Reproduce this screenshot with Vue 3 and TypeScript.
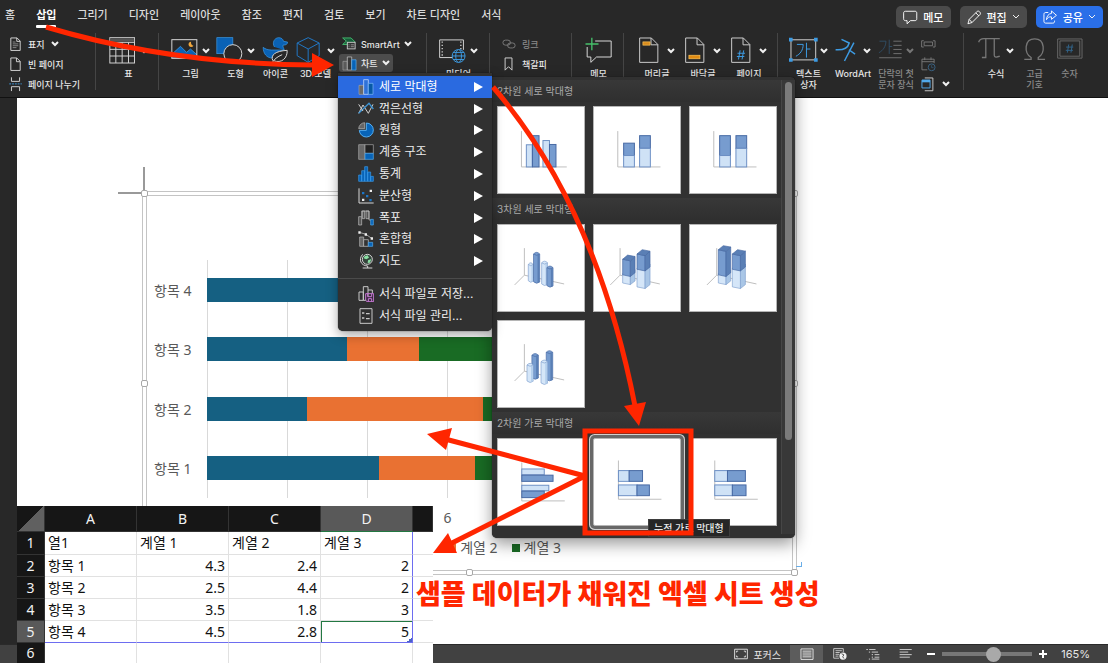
<script setup lang="ts">
import { ref } from 'vue'

interface Tool {
  icon: string
  lines: string[]
  chevron?: boolean
  dim?: boolean
}

interface Series {
  name: string
  tone: string
}

const tabs = ['홈', '삽입', '그리기', '디자인', '레이아웃', '참조', '편지', '검토', '보기', '차트 디자인', '서식']
const zoomLevel = ref(58)

/* Ribbon and status icons, drawn on a grid of three units per pixel */
const icons: Record<string, string> = {
  cover: '<g fill="none" stroke="#d6d6d6" stroke-width="3"><path d="M5 3H25L35 13V43H5Z"/><path d="M24 3V14H35"/></g><path d="M11 16H20M11 22H29M11 28H29M11 34H23" stroke="#8c8c8c" stroke-width="3"/>',
  blank: '<g fill="none" stroke="#d6d6d6" stroke-width="3"><path d="M5 3H24L35 14V43H5Z"/><path d="M23 3V15H35"/></g>',
  pageBreak: '<g fill="none" stroke="#d6d6d6" stroke-width="3"><path d="M7 1V14H33V1M7 45V31H33V45"/></g><path d="M0 22H40" stroke="#3f9be0" stroke-width="3" stroke-dasharray="6 3"/>',
  table: '<g fill="none" stroke="#cfcfcf" stroke-width="3"><rect x="2" y="2" width="74" height="76"/><path d="M2 16H76M2 37H76M2 57H76M20 16V78M39 16V78M58 16V78"/></g><path d="M3 9H75" stroke="#565656" stroke-width="10"/>',
  picture: '<path d="M4 62V50L28 28L46 46L58 36L76 52V62Z" fill="#0a62b5" stroke="#4aa3e8" stroke-width="2"/><rect x="2" y="8" width="75" height="56" fill="none" stroke="#d6d6d6" stroke-width="3"/><path d="M60 14A8 8 0 1 0 67 26A9 9 0 0 1 60 14Z" fill="#f0a63c"/>',
  shapes: '<rect x="2" y="2" width="48" height="48" fill="#0a62b5" stroke="#3c9be8" stroke-width="2"/><circle cx="50" cy="50" r="27" fill="#282828" stroke="#d6d6d6" stroke-width="3"/>',
  duck: '<path d="M37 30C29 18 36 2 50 2C58 2 63 7 64 13L76 15C77 21 71 25 63 24C61 29 65 33 66 39H28C17 39 9 36 3 31C3 50 14 63 30 63C36 50 48 42 66 39" fill="#0a62b5" stroke="#3c9be8" stroke-width="2"/><path d="M32 71C24 54 40 42 75 40C76 64 58 80 34 71M28 80C36 66 46 59 60 53" fill="#282828" stroke="#d6d6d6" stroke-width="3"/>',
  cube: '<path d="M36 2L69 18V56L36 76L3 56V18ZM3 18L36 36L69 18M36 36V76" fill="none" stroke="#2277c4" stroke-width="3"/>',
  smartart: '<path d="M2 3H29L42 16L34 24H2L14 13Z" fill="#175e39" stroke="#43b86d" stroke-width="3"/><rect x="17" y="17" width="25" height="21" fill="#333" stroke="#c9c9c9" stroke-width="3"/><path d="M21 25H24M28 25H38M21 31H24M28 31H38" stroke="#c9c9c9" stroke-width="2"/>',
  chart: '<path d="M3 17H17V45H3Z" fill="#5b5b5b" stroke="#a5a5a5" stroke-width="2"/><path d="M17 3H31V45H17Z" fill="#3a3a3a" stroke="#d8d8d8" stroke-width="2"/><path d="M31 12H45V45H31Z" fill="#0864b8" stroke="#67b4f0" stroke-width="2"/>',
  media: '<g fill="none" stroke="#d6d6d6" stroke-width="3"><path d="M42 58H2V3H76V34" /></g><path d="M10 8V55M68 8V32" stroke="#d6d6d6" stroke-width="4" stroke-dasharray="4 6"/><g fill="#282828" stroke="#3d9be3" stroke-width="3"><circle cx="61" cy="53" r="20"/><ellipse cx="61" cy="53" rx="9" ry="20"/><path d="M41 53H81M44 42H78M44 64H78"/></g>',
  link: '<g fill="none" stroke="#7c7c7c" stroke-width="3"><rect x="2" y="10" width="24" height="16" rx="8"/><rect x="17" y="19" width="24" height="16" rx="8"/></g>',
  bookmark: '<path d="M9 3H31V42L20 31L9 42Z" fill="none" stroke="#d6d6d6" stroke-width="3"/>',
  comment: '<path d="M30 12H78V60H34L17 76V60H6V30" fill="none" stroke="#d6d6d6" stroke-width="3"/><path d="M20 2V40M1 21H40" stroke="#45c06a" stroke-width="4"/>',
  header: '<path d="M2 2H38L58 22V77H2ZM37 2V23H58" fill="none" stroke="#cfcfcf" stroke-width="3"/><rect x="12" y="14" width="22" height="10" fill="#d98c1d" stroke="#ffc65c" stroke-width="2"/>',
  footer: '<path d="M2 2H38L58 22V77H2ZM37 2V23H58" fill="none" stroke="#cfcfcf" stroke-width="3"/><rect x="12" y="55" width="34" height="11" fill="#e08b12" stroke="#ffc65c" stroke-width="2"/>',
  pageNo: '<path d="M2 2H38L58 22V77H2ZM37 2V23H58" fill="none" stroke="#cfcfcf" stroke-width="3"/><path d="M28 40L23 68M39 40L34 68M20 49H43M18 59H41" stroke="#3d9be3" stroke-width="3"/>',
  textbox: '<rect x="6" y="8" width="75" height="61" fill="none" stroke="#cfcfcf" stroke-width="3"/><path d="M0 2H11V13H0ZM76 2H87V13H76ZM0 64H11V75H0ZM76 64H87V75H76Z" fill="#3d9be3"/><path d="M24 22H43C43 40 34 51 21 58M53 17V62M53 36H65" fill="none" stroke="#3d9be3" stroke-width="3"/>',
  wordart: '<path d="M22 3L48 15C44 31 28 40 2 38M64 14L32 76M47 38L68 53" fill="none" stroke="#3d9be3" stroke-width="5"/>',
  dropcap: '<path d="M5 9H27C26 27 18 40 3 48M38 4V52M38 27H48" fill="none" stroke="#31506a" stroke-width="3"/><path d="M52 9H80M52 23H80M52 37H80M52 51H80M4 65H80" stroke="#777" stroke-width="3"/>',
  signature: '<path d="M9 2H2V22H9M38 2H45V22H38M10 6H37V18H10Z" fill="none" stroke="#777" stroke-width="3"/>',
  calendar: '<path d="M20 41H3V7H42V20M3 15H42M12 1V10M32 1V10" fill="none" stroke="#777" stroke-width="3"/><circle cx="34" cy="33" r="11" fill="#282828" stroke="#3b6485" stroke-width="3"/><path d="M34 26V34H40" fill="none" stroke="#3b6485" stroke-width="2"/>',
  object: '<path d="M12 3H38V44H12" fill="none" stroke="#cfcfcf" stroke-width="3"/><path d="M3 10H29V35H3Z" fill="#282828" stroke="#51a9eb" stroke-width="3"/><path d="M3 13H29" stroke="#51a9eb" stroke-width="8"/>',
  pi: '<path d="M2 15C5 5 10 4 18 4H67M24 4V62H12M50 4V55C50 62 57 62 67 58" fill="none" stroke="#777" stroke-width="4"/>',
  omega: '<path d="M7 68H28V62C6 49 6 5 39 5C72 5 72 49 50 62V68H71" fill="none" stroke="#777" stroke-width="4"/>',
  number: '<path d="M2 5H77V64H2ZM9 11H70V58H9Z" fill="none" stroke="#686868" stroke-width="3"/><path d="M36 22L32 47M47 22L43 47M28 30H50M27 40H49" stroke="#31648a" stroke-width="3"/>',
  bubble: '<path d="M8 4H38C42 4 44 6 44 10V28C44 32 42 34 38 34H24L13 44V34H8C4 34 2 32 2 28V10C2 6 4 4 8 4Z" fill="none" stroke="#fff" stroke-width="3"/>',
  pencil: '<path d="M3 44L7 30L33 4C37 1 46 9 42 14L16 40ZM28 9L38 19M7 30L16 40" fill="none" stroke="#fff" stroke-width="3"/>',
  share: '<path d="M17 8H9C5 8 3 10 3 14V36C3 40 5 42 9 42H31C35 42 37 40 37 36V34M27 3L43 17L27 30V22C19 21 15 24 11 31C12 19 18 12 27 11Z" fill="none" stroke="#fff" stroke-width="3"/>',
  mColumn: '<path d="M3 19H17V46H3Z" fill="#6a6a6a" stroke="#a5a5a5" stroke-width="2"/><path d="M17 2H31V46H17Z" fill="#2f72d8" stroke="#dceaff" stroke-width="2"/><path d="M31 13H45V46H31Z" fill="#0759a6" stroke="#7fbcff" stroke-width="2"/>',
  mLine: '<path d="M2 37L15 12L31 37L45 10" fill="none" stroke="#d0d0d0" stroke-width="3"/><path d="M2 37L33 7L46 24" fill="none" stroke="#3e94d4" stroke-width="4"/><path d="M2 10L15 30" stroke="#d0d0d0" stroke-width="3"/>',
  mPie: '<path d="M25 3A21 21 0 1 1 4 25H25Z" fill="#0864b8" stroke="#54aff3" stroke-width="3"/><path d="M20 2V20H2A19 19 0 0 1 20 2Z" fill="#666" stroke="#bbb" stroke-width="2"/>',
  mTree: '<path d="M2 2H21V46H2Z" fill="#686868" stroke="#aaa" stroke-width="2"/><path d="M21 2H46V28H21Z" fill="#222" stroke="#aaa" stroke-width="2"/><path d="M21 28H46V46H21Z" fill="#0864b8" stroke="#54aff3" stroke-width="2"/>',
  mStat: '<path d="M2 27H11V46H2ZM11 14H20V46H11ZM20 2H29V46H20ZM29 18H38V46H29ZM38 31H46V46H38Z" fill="#0864b8" stroke="#3c9be8" stroke-width="2"/>',
  mScatter: '<path d="M3 1V45H47" fill="none" stroke="#d6d6d6" stroke-width="3"/><path d="M12 12H19V19H12ZM24 21H31V28H24ZM34 33H41V40H34Z" fill="#1b76c8"/><path d="M35 5H42V12H35ZM12 32H19V39H12Z" fill="#eee"/>',
  mFall: '<path d="M2 20H11V45H2ZM13 3H20V26H13ZM24 3H33V26H24Z" fill="#555" stroke="#c2c2c2" stroke-width="2"/><path d="M11 20V3H33V30H40" fill="none" stroke="#c2c2c2" stroke-width="2"/><path d="M38 28H46V45H38Z" fill="#0864b8" stroke="#54aff3" stroke-width="2"/>',
  mCombo: '<path d="M5 18H17V46H5Z" fill="#666" stroke="#bbb" stroke-width="2"/><path d="M17 26H31V46H17Z" fill="#333" stroke="#ccc" stroke-width="2"/><path d="M31 34H44V46H31Z" fill="#0864b8" stroke="#54aff3" stroke-width="2"/><path d="M4 4L24 10L42 23" fill="none" stroke="#ddd" stroke-width="2"/><path d="M1 1H8V8H1ZM20 7H27V14H20ZM38 19H45V26H38Z" fill="#eee"/>',
  mMap: '<circle cx="28" cy="19" r="15" fill="#33443b" stroke="#d6d6d6" stroke-width="3"/><path d="M20 10L29 7L33 14L25 19L17 16ZM30 22L40 18L36 29L29 30Z" fill="#8be0a4"/><path d="M14 4C0 20 9 38 29 39M29 39V45M14 45H43" fill="none" stroke="#d6d6d6" stroke-width="3"/>',
  mSave: '<path d="M3 18H16V43H3ZM16 2H30V43H16ZM30 12H43V22" fill="none" stroke="#c8c8c8" stroke-width="3"/><path d="M23 23H47V47H27L23 43ZM29 23V32H41V23M31 47V38H41V47" fill="#3a2a3e" stroke="#c678d4" stroke-width="3"/>',
  mManage: '<path d="M6 2H42V46H6Z" fill="none" stroke="#c8c8c8" stroke-width="3"/><path d="M12 15H19M12 30H19M24 17H35M24 32H35" stroke="#c8c8c8" stroke-width="4"/>',
  focus: '<path d="M2 3H42V33H2ZM8 13V9H13M31 9H36V13M36 23V27H31M13 27H8V23" fill="none" stroke="#dedede" stroke-width="3"/>',
  printView: '<path d="M3 2H41V35H3Z" fill="none" stroke="#e4e4e4" stroke-width="3"/><path d="M8 9H36M8 15H36M8 21H36M8 27H36" stroke="#e4e4e4" stroke-width="3"/>',
  webView: '<path d="M20 34H2V2H34V14M8 9H29M8 15H22M8 21H20M8 27H18" fill="none" stroke="#d0d0d0" stroke-width="3"/><circle cx="33" cy="27" r="12" fill="#f0f0f0"/><path d="M28 19L36 23L32 29L36 35" fill="none" stroke="#444" stroke-width="3"/>',
  outline: '<path d="M1 4H6M10 4H30M9 12H13M18 12H38M18 20H22M27 20H42M18 28H22M27 28H42M9 34H13M18 34H42" stroke="#d0d0d0" stroke-width="3"/>',
  draft: '<path d="M2 4H40M2 12H29M2 20H40M2 28H34" stroke="#d0d0d0" stroke-width="3"/>',
}

const picks: Tool[] = [
  { icon: 'picture', lines: ['그림'], chevron: true },
  { icon: 'shapes', lines: ['도형'], chevron: true },
  { icon: 'duck', lines: ['아이콘'] },
  { icon: 'cube', lines: ['3D 모델'], chevron: true },
]
const pageTools: Tool[] = [
  { icon: 'header', lines: ['머리글'], chevron: true },
  { icon: 'footer', lines: ['바닥글'], chevron: true },
  { icon: 'pageNo', lines: ['페이지'], chevron: true },
]
const textTools: Tool[] = [
  { icon: 'textbox', lines: ['텍스트', '상자'], chevron: true },
  { icon: 'wordart', lines: ['WordArt'], chevron: true },
  { icon: 'dropcap', lines: ['단락의 첫', '문자 장식'], chevron: true, dim: true },
]
const symbolTools: Tool[] = [
  { icon: 'pi', lines: ['수식'], chevron: true },
  { icon: 'omega', lines: ['고급', '기호'], dim: true },
  { icon: 'number', lines: ['숫자'], dim: true },
]
const toolGroups: { id: string; box: string; tools: Tool[] }[] = [
  { id: 'pages', box: '0 0 80 81', tools: pageTools },
  { id: 'texts', box: '0 0 88 81', tools: textTools },
  { id: 'symbols', box: '0 0 80 81', tools: symbolTools },
]

const chartKinds = [
  ['mColumn', '세로 막대형'],
  ['mLine', '꺾은선형'],
  ['mPie', '원형'],
  ['mTree', '계층 구조'],
  ['mStat', '통계'],
  ['mScatter', '분산형'],
  ['mFall', '폭포'],
  ['mCombo', '혼합형'],
  ['mMap', '지도'],
]
const templateActions = [
  ['mSave', '서식 파일로 저장...'],
  ['mManage', '서식 파일 관리...'],
]

/* Thumbnail drawing helpers on a 264 unit square */
const LIGHT = '#cfe2f6'
const DARK = '#779ccf'
const bar = (x: number, y: number, w: number, h: number, dark: boolean) =>
  `<rect x="${x}" y="${y}" width="${w}" height="${h}" fill="${dark ? DARK : LIGHT}" stroke="${dark ? '#4668a3' : '#6c8fc4'}" stroke-width="3"/>`
const axis = (d: string) => `<path d="${d}" fill="none" stroke="#bdbdbd" stroke-width="3"/>`
const floor = (x: number) => axis(`M${x} 71V154L${x - 30} 184M${x} 154L${x + 122} 181`)
const block = (x: number, y: number, w: number, bottom: number, dark: boolean, cap = true) => {
  const m = x + w * 0.62
  const s = `stroke="${dark ? '#4668a3' : '#7e9fce'}" stroke-width="2" stroke-linejoin="round"`
  const top = cap
    ? `<path d="M${x} ${y}L${x + w * 0.4} ${y - w * 0.33}L${x + w} ${y - w * 0.22}L${m} ${y + 5}Z" fill="${dark ? '#5a7fb5' : '#e0eefb'}" ${s}/>`
    : ''
  const lift = w * 0.3
  return `<path d="M${x} ${y}L${m} ${y + 5}V${bottom}L${x} ${bottom - 5}Z" fill="${dark ? DARK : '#d5e6f8'}" ${s}/><path d="M${m} ${y + 5}L${x + w} ${y - (cap ? w * 0.22 : lift)}V${bottom - lift}L${m} ${bottom}Z" fill="${dark ? '#5a7fb5' : '#a9c6e6'}" ${s}/>${top}`
}
const rod = (x: number, y: number, w: number, bottom: number, dark: boolean) => {
  const line = dark ? '#4668a3' : '#7e9fce'
  return `<path d="M${x} ${y + 4}Q${x + w / 2} ${y - 6} ${x + w} ${y + 4}V${bottom - 4}Q${x + w / 2} ${bottom + 4} ${x} ${bottom - 5}Z" fill="${dark ? DARK : '#d5e6f8'}" stroke="${line}" stroke-width="2"/><path d="M${x + w * 0.65} ${y + 7}H${x + w - 1}V${bottom - 3}H${x + w * 0.65}Z" fill="${dark ? '#5a7fb5' : '#b4cfec'}"/><path d="M${x} ${y + 4}Q${x + w / 2} ${y + 12} ${x + w} ${y + 4}" fill="none" stroke="${line}" stroke-width="2"/>`
}

const sections = [
  {
    title: '2차원 세로 막대형',
    tiles: [
      { label: '묶은 세로 막대형', art: axis('M72 74V184H211') + bar(87, 116, 18, 68, false) + bar(106, 88, 20, 96, true) + bar(138, 103, 20, 81, false) + bar(158, 115, 20, 69, true) },
      { label: '누적 세로 막대형', art: axis('M73 74V184H204') + bar(91, 111, 33, 38, true) + bar(91, 149, 33, 35, false) + bar(140, 88, 33, 39, true) + bar(140, 127, 33, 57, false) },
      { label: '100% 기준 누적 세로 막대형', art: axis('M73 74V184H204') + bar(91, 88, 33, 61, true) + bar(91, 149, 33, 35, false) + bar(141, 88, 33, 39, true) + bar(141, 127, 33, 57, false) },
    ],
  },
  {
    title: '3차원 세로 막대형',
    tiles: [
      { label: '3차원 묶은 세로 막대형', art: floor(81) + rod(93, 117, 15, 176, false) + rod(109, 85, 19, 179, true) + rod(134, 112, 18, 186, false) + rod(150, 127, 19, 191, true) },
      { label: '3차원 누적 세로 막대형', art: floor(80) + block(88, 149, 38, 183, false, false) + block(88, 105, 38, 158, true) + block(132, 132, 40, 195, false, false) + block(132, 89, 40, 141, true) },
      { label: '3차원 100% 기준 누적 세로 막대형', art: floor(82) + block(87, 149, 38, 183, false, false) + block(87, 76, 38, 158, true) + block(130, 132, 40, 195, false, false) + block(130, 89, 40, 141, true) },
      { label: '3차원 세로 막대형', art: floor(81) + rod(104, 101, 20, 179, true) + rod(148, 92, 20, 184, true) + rod(89, 131, 19, 189, false) + rod(132, 121, 20, 195, false) },
    ],
  },
  {
    title: '2차원 가로 막대형',
    tiles: [
      { label: '묶은 가로 막대형', art: axis('M73 72V190H205') + bar(73, 92, 69, 18, false) + bar(73, 111, 96, 19, true) + bar(73, 142, 83, 17, false) + bar(73, 160, 69, 20, true) },
      { label: '누적 가로 막대형', chosen: true, art: axis('M75 66V185H207') + bar(75, 97, 33, 33, false) + bar(108, 97, 41, 33, true) + bar(75, 141, 57, 33, false) + bar(132, 141, 38, 33, true) },
      { label: '100% 기준 누적 가로 막대형', art: axis('M76 66V185H208') + bar(76, 97, 39, 33, false) + bar(115, 97, 55, 33, true) + bar(76, 141, 54, 33, false) + bar(130, 141, 42, 33, true) },
    ],
  },
]

const series: Series[] = [
  { name: '계열 1', tone: 'blue' },
  { name: '계열 2', tone: 'orange' },
  { name: '계열 3', tone: 'green' },
]
const rows = [
  { name: '항목 1', values: [4.3, 2.4, 2] },
  { name: '항목 2', values: [2.5, 4.4, 2] },
  { name: '항목 3', values: [3.5, 1.8, 3] },
  { name: '항목 4', values: [4.5, 2.8, 5] },
]
const chartRows = [...rows].reverse()
const legend = series.slice(1)
const axisMax = 14
const ticks = [0, 2, 4, 6, 8, 10, 12, 14]
const tickLabels = [6]
const share = (v: number) => ({ width: `${(v / axisMax) * 100}%` })
const at = (v: number) => ({ left: `${(v / axisMax) * 100}%` })
</script>

<template>
  <div class="app">
    <header class="top">
      <nav class="tabs">
        <button v-for="t in tabs" :key="t" class="tab" :class="{ on: t === '삽입' }">{{ t }}</button>
      </nav>
      <div class="actions">
        <button class="pill"><svg viewBox="0 0 48 48" class="i15" v-html="icons.bubble" />메모</button>
        <button class="pill">
          <svg viewBox="0 0 48 48" class="i15" v-html="icons.pencil" />편집
          <svg viewBox="0 0 8 8" class="chev thin"><path d="M1 2 4 5 7 2" /></svg>
        </button>
        <button class="pill blue">
          <svg viewBox="0 0 48 48" class="i15" v-html="icons.share" />공유
          <svg viewBox="0 0 8 8" class="chev thin"><path d="M1 2 4 5 7 2" /></svg>
        </button>
      </div>
    </header>

    <section class="ribbon">
      <div class="group first">
        <div class="stack">
          <button class="mini">
            <svg viewBox="0 0 40 48" class="m13" v-html="icons.cover" />표지
            <svg viewBox="0 0 8 8" class="chev"><path d="M1 2 4 5 7 2" /></svg>
          </button>
          <button class="mini"><svg viewBox="0 0 40 48" class="m13" v-html="icons.blank" />빈 페이지</button>
          <button class="mini"><svg viewBox="0 0 40 48" class="m13" v-html="icons.pageBreak" />페이지 나누기</button>
        </div>
      </div>
      <div class="group tables">
        <button class="tool">
          <span class="face"><svg viewBox="0 0 80 81" class="big" v-html="icons.table" /><svg viewBox="0 0 8 8" class="chev"><path d="M1 2 4 5 7 2" /></svg></span>
          <span>표</span>
        </button>
      </div>
      <div class="group arts">
        <button v-for="t in picks" :key="t.icon" class="tool">
          <span class="face"><svg viewBox="0 0 80 81" class="big" v-html="icons[t.icon]" /><svg v-if="t.chevron" viewBox="0 0 8 8" class="chev"><path d="M1 2 4 5 7 2" /></svg></span>
          <span>{{ t.lines[0] }}</span>
        </button>
        <div class="stack charts">
          <button class="mini">
            <svg viewBox="0 0 48 48" class="m15" v-html="icons.smartart" />SmartArt
            <svg viewBox="0 0 8 8" class="chev"><path d="M1 2 4 5 7 2" /></svg>
          </button>
          <button class="mini pressed">
            <svg viewBox="0 0 48 48" class="m15" v-html="icons.chart" />차트
            <svg viewBox="0 0 8 8" class="chev"><path d="M1 2 4 5 7 2" /></svg>
          </button>
        </div>
      </div>
      <div class="group medias">
        <button class="tool">
          <span class="face"><svg viewBox="0 -6 84 84" class="big" v-html="icons.media" /><svg viewBox="0 0 8 8" class="chev"><path d="M1 2 4 5 7 2" /></svg></span>
          <span>미디어</span>
        </button>
      </div>
      <div class="group links">
        <div class="stack">
          <button class="mini dim"><svg viewBox="0 0 43 48" class="m14" v-html="icons.link" />링크</button>
          <button class="mini"><svg viewBox="0 0 43 48" class="m14" v-html="icons.bookmark" />책갈피</button>
        </div>
      </div>
      <div class="group memos">
        <button class="tool">
          <span class="face"><svg viewBox="0 0 80 81" class="big" v-html="icons.comment" /></span>
          <span>메모</span>
        </button>
      </div>
      <div v-for="g in toolGroups" :key="g.id" class="group" :class="g.id">
        <button v-for="t in g.tools" :key="t.icon" class="tool" :class="{ dim: t.dim }">
          <span class="face"><svg :viewBox="g.box" class="wide" v-html="icons[t.icon]" /><svg v-if="t.chevron" viewBox="0 0 8 8" class="chev"><path d="M1 2 4 5 7 2" /></svg></span>
          <span v-for="l in t.lines" :key="l">{{ l }}</span>
        </button>
        <div v-if="g.id === 'texts'" class="stack">
          <button class="mini" aria-label="서명란"><svg viewBox="0 -10 48 48" class="m15" v-html="icons.signature" /></button>
          <button class="mini" aria-label="날짜 및 시간"><svg viewBox="0 0 48 48" class="m15" v-html="icons.calendar" /></button>
          <button class="mini" aria-label="개체">
            <svg viewBox="0 0 48 48" class="m15" v-html="icons.object" />
            <svg viewBox="0 0 8 8" class="chev"><path d="M1 2 4 5 7 2" /></svg>
          </button>
        </div>
      </div>
    </section>

    <main class="desk">
      <div class="paper">
        <figure class="chart">
          <div class="plot-row">
            <div class="names"><span v-for="r in chartRows" :key="r.name">{{ r.name }}</span></div>
            <div class="plot">
              <i v-for="t in ticks" :key="t" class="line" :style="at(t)"></i>
              <div v-for="r in chartRows" :key="r.name" class="track">
                <b v-for="(v, n) in r.values" :key="n" :class="series[n].tone" :style="share(v)"></b>
              </div>
            </div>
          </div>
          <div class="scale"><span v-for="t in tickLabels" :key="t" :style="at(t)">{{ t }}</span></div>
          <figcaption class="legend">
            <span v-for="s in legend" :key="s.name"><b :class="s.tone"></b>{{ s.name }}</span>
          </figcaption>
          <i class="crop across"></i><i class="crop down"></i><i class="corner"></i>
          <i v-for="h in ['nw', 'n', 'ne', 'w', 'e', 'sw', 's', 'se']" :key="h" class="handle" :class="h"></i>
        </figure>
      </div>
    </main>

    <footer class="status">
      <button class="st focus"><svg viewBox="0 0 44 36" class="s14" v-html="icons.focus" />포커스</button>
      <button class="st view on" aria-label="인쇄 모양"><svg viewBox="0 0 44 36" class="s14" v-html="icons.printView" /></button>
      <button class="st view" aria-label="웹 모양"><svg viewBox="0 0 46 40" class="s14" v-html="icons.webView" /></button>
      <button class="st view" aria-label="개요"><svg viewBox="0 0 44 36" class="s14" v-html="icons.outline" /></button>
      <button class="st view" aria-label="초안"><svg viewBox="0 0 44 36" class="s14" v-html="icons.draft" /></button>
      <button class="st sign" aria-label="축소"><svg viewBox="0 0 10 10" class="s10"><path d="M1 5H9" /></svg></button>
      <input v-model="zoomLevel" type="range" min="0" max="100" aria-label="확대/축소" />
      <button class="st sign" aria-label="확대"><svg viewBox="0 0 10 10" class="s10"><path d="M1 5H9M5 1V9" /></svg></button>
      <span class="percent">165%</span>
    </footer>

    <table class="sheet">
      <thead>
        <tr><th class="all"></th><th>A</th><th>B</th><th>C</th><th class="hot">D</th><th class="rest"></th></tr>
      </thead>
      <tbody>
        <tr><th>1</th><td>열1</td><td v-for="s in series" :key="s.name">{{ s.name }}</td><td></td></tr>
        <tr v-for="(r, i) in rows" :key="r.name">
          <th :class="{ hot: i === 3 }">{{ i + 2 }}</th>
          <td>{{ r.name }}</td>
          <td v-for="(v, n) in r.values" :key="n" class="num" :class="{ active: i === 3 && n === 2 }">{{ v }}</td>
          <td></td>
        </tr>
        <tr><th>6</th><td></td><td></td><td></td><td></td><td></td></tr>
      </tbody>
    </table>

    <div class="gallery">
      <div class="scroll">
        <section v-for="s in sections" :key="s.title">
          <h2>{{ s.title }}</h2>
          <div class="tiles">
            <button v-for="t in s.tiles" :key="t.label" class="tile" :class="{ chosen: t.chosen }" :aria-label="t.label">
              <svg viewBox="0 0 264 264" v-html="t.art" />
            </button>
          </div>
        </section>
      </div>
      <div class="bar"><i></i></div>
    </div>

    <div class="menu">
      <div class="kinds">
        <button v-for="(k, i) in chartKinds" :key="k[1]" class="entry" :class="{ on: i === 0 }">
          <svg viewBox="0 0 48 48" class="i16" v-html="icons[k[0]]" /><span>{{ k[1] }}</span>
          <svg viewBox="0 0 9 10" class="more"><path d="M0 0 9 5 0 10Z" /></svg>
        </button>
      </div>
      <hr />
      <div class="files">
        <button v-for="k in templateActions" :key="k[1]" class="entry">
          <svg viewBox="0 0 48 48" class="i16" v-html="icons[k[0]]" /><span>{{ k[1] }}</span>
        </button>
      </div>
    </div>

    <div class="tip">누적 가로 막대형</div>

    <svg class="marks" viewBox="0 0 1108 663" width="1108" height="663">
      <g fill="none" stroke="#ff2600" stroke-width="5">
        <path d="M46 27Q170 64 314 65" />
        <path d="M493 87Q596 206 635 406" />
        <path d="M585 476L445 439" />
        <path d="M585 476L450 544" />
        <rect x="585" y="431" width="106" height="102" />
      </g>
      <path d="M312 53L334 65L312 77ZM624 406L646 402L639 426ZM427 434L452 428L446 450ZM433 553L448 533L457 553Z" fill="#ff2600" />
    </svg>
    <p class="note">샘플 데이터가 채워진 엑셀 시트 생성</p>
  </div>
</template>

<style>
body { margin: 0; background: #282828; overflow: hidden; }
</style>

<style scoped>
* { box-sizing: border-box; }
.app {
  position: relative;
  display: flex;
  flex-direction: column;
  min-height: 100vh;
  overflow: hidden;
  background: #282828;
  color: #e6e6e6;
  font-family: Inter, "Noto Sans CJK KR", sans-serif;
  font-size: 11px;
}
button { border: 0; padding: 0; margin: 0; background: none; color: inherit; font: inherit; white-space: nowrap; }
svg { flex: none; display: block; }
.chev { width: 8px; height: 8px; fill: none; stroke: #f0f0f0; stroke-width: 2; }
.chev.thin { stroke-width: 1; }
.i15 { width: 15px; height: 15px; }
.i16 { width: 16px; height: 16px; }

.top { display: flex; justify-content: space-between; height: 33px; padding: 0 5px; }
.tabs { display: flex; gap: 21px; height: 29px; }
.tab { position: relative; font-weight: 500; line-height: 31px; color: #dcdcdc; }
.tab.on { font-weight: 700; color: #fff; }
.tab.on::after { content: ""; position: absolute; left: 0; right: 0; bottom: 1px; height: 3px; border-radius: 1px; background: #fff; }
.actions { display: flex; gap: 9px; padding-top: 6px; }
.pill { display: flex; align-items: center; gap: 5px; height: 22px; padding: 0 7px; border-radius: 5px; background: #4b4b4b; color: #fff; font-weight: 500; }

.ribbon { display: flex; height: 65px; font-size: 9px; font-weight: 500; line-height: 11px; border-bottom: 1px solid #111; }
.group { position: relative; display: flex; flex: none; align-items: flex-start; gap: 7px; padding-top: 4px; }
.group:not(.symbols)::after { content: ""; position: absolute; right: 0; top: 0; width: 1px; height: 57px; background: #454545; }
.first { width: 96px; padding-left: 9px; }
.tables { width: 63px; padding-left: 13px; }
.arts { width: 268px; padding-left: 12px; gap: 6px; }
.medias { width: 63px; padding-left: 12px; }
.links { width: 82px; padding-left: 12px; }
.memos { width: 52px; padding-left: 12px; }
.pages { width: 154px; padding-left: 15px; gap: 10px; }
.texts { width: 186px; padding-left: 11px; }
.symbols { padding-left: 14px; gap: 6px; }
.tool { display: flex; flex-direction: column; align-items: center; min-width: 29px; }
.face { display: flex; align-items: center; gap: 4px; height: 27px; margin-bottom: 4px; }
.big { width: 27px; height: 27px; }
.wide { width: 26px; height: 27px; }
.texts .tool:first-child .wide { width: 29px; }
.pages .face, .symbols .face, .texts .face { gap: 2px; }
.dim { color: #8a8a8a; }
.dim .chev { stroke: #777; }
.stack { display: flex; flex-direction: column; margin-top: -3px; }
.mini { display: flex; align-items: center; gap: 6px; height: 20px; }
.m13 { width: 13px; height: 15px; }
.m14 { width: 14px; height: 15px; }
.m15 { width: 15px; height: 15px; }
.charts { margin-left: -2px; }
.charts .mini { gap: 4px; height: 18px; padding: 0 3px; margin-top: 1px; align-self: flex-start; }

.charts .pressed { border-radius: 3px; background: #4c4c4c; }

.desk { display: flex; flex: 1; padding-left: 17px; min-height: 0; }
.paper { flex: 1; padding: 93px 0 0 125px; background: #fff; }
.chart {
  position: relative;
  display: flex;
  flex-direction: column;
  width: 655px;
  height: 384px;
  margin: 0;
  padding: 64px 28px 0 7px;
  border: 1px solid #c4c4c4;
  outline: 1px solid #c4c4c4;
  outline-offset: -5px;
  color: #595959;
  font-family: "Noto Sans", "Noto Sans CJK KR", sans-serif;
  font-size: 14px;
}
.plot-row { display: flex; height: 238px; padding-top: 4px; box-sizing: content-box; }
.names { display: flex; flex-direction: column; width: 57px; padding-left: 4px; }
.names span { display: flex; flex: 1; align-items: center; }
.plot { position: relative; display: flex; flex: 1; flex-direction: column; }
.line { position: absolute; top: 0; bottom: 0; width: 1px; background: #d9d9d9; }
.track { position: relative; display: flex; flex: 1; align-items: center; }
.track b { height: 24px; }
.blue { background: #156082; }
.orange { background: #e97132; }
.green { background: #196b24; }
.pill.blue { background: #2a6fe8; }
.scale { position: relative; height: 30px; margin-left: 57px; }
.scale span { position: absolute; top: 10px; width: 20px; margin-left: -10px; line-height: 20px; text-align: center; }
.legend { display: flex; justify-content: flex-end; gap: 14px; padding: 10px 207px 0 0; line-height: 20px; }
.legend span { display: flex; align-items: center; gap: 4px; }
.legend b { width: 8px; height: 8px; }
.handle { position: absolute; width: 7px; height: 7px; border: 1px solid #a8a8a8; border-radius: 2px; background: #fff; }
.nw, .n, .ne { top: -2px; }
.sw, .s, .se { bottom: -2px; }
.w, .e { top: 188px; }
.nw, .w, .sw { left: -2px; }
.ne, .e, .se { right: -2px; }
.n, .s { left: 323px; }
.crop { position: absolute; background: #999; }
.across { left: -25px; top: 0; width: 24px; height: 2px; }
.down { left: 0; top: -25px; width: 2px; height: 24px; }
.corner { position: absolute; right: -6px; bottom: 7px; width: 6px; height: 5px; border: solid #6aaee8; border-width: 0 1px 1px 0; }

.status { display: flex; align-items: center; justify-content: flex-end; height: 19px; padding-right: 18px; background: #414141; border-top: 1px solid #2a2a2a; font-size: 10px; }
.st { display: flex; align-items: center; justify-content: center; gap: 5px; height: 18px; }
.focus { margin-right: 9px; }
.view { width: 33px; }
.view.on { background: #5c5c5c; }
.sign { width: 18px; }
.s14 { width: 14px; height: 12px; }
.s10 { width: 10px; height: 10px; stroke: #fff; stroke-width: 2; }
input { appearance: none; width: 90px; height: 14px; margin: 0 2px; background: linear-gradient(#777, #777) center / 100% 4px no-repeat; border-radius: 2px; }
input::-webkit-slider-thumb { appearance: none; width: 15px; height: 15px; border-radius: 50%; background: #a9a9a9; }
.percent { width: 38px; text-align: right; font-size: 11px; }

.sheet {
  position: absolute;
  left: 17px;
  bottom: 0;
  width: 416px;
  border-collapse: separate;
  border-spacing: 0;
  table-layout: fixed;
  background: #fff;
  color: #111;
  font-family: "Noto Sans", "Noto Sans CJK KR", sans-serif;
  font-size: 14px;
  line-height: 20px;
}
.sheet th, .sheet td { height: 22px; padding: 0 3px; border: solid #e1e1e1; border-width: 0 1px 1px 0; text-align: left; overflow: hidden; }
.sheet th { background: #161616; border-color: #333; color: #f2f2f2; font-weight: 400; text-align: center; }
.sheet thead th { height: 26px; width: 92px; }
.sheet thead .all { width: 28px; background: linear-gradient(135deg, #161616 50%, #606060 50%); }
.sheet thead .rest { width: 20px; }
.sheet .hot { background: #595959; }
.sheet thead .hot { border-bottom-color: #237842; }
.sheet tbody tr:first-child > * { height: 23px; }
.sheet tbody tr:last-child > * { height: 20px; border-bottom: 0; }
.sheet .num { text-align: right; }
.sheet tbody tr:not(:last-child) td:nth-child(5) { border-right-color: #6d6df0; }
.sheet tbody tr:nth-child(5) td:not(:last-child) { border-bottom-color: #6d6df0; }
.sheet tbody tr:nth-child(5) .active { border-color: #237842; box-shadow: inset 1px 1px #237842; background: linear-gradient(135deg, transparent 50%, #4b62c8 50%) right bottom / 5px 5px no-repeat; }
.sheet td:last-child { border-right: 0; }

.menu { position: absolute; left: 338px; top: 73px; width: 154px; height: 258px; padding-top: 3px; border-radius: 0 0 5px 5px; background: #313131; color: #ededed; font-size: 12px; box-shadow: 0 4px 12px rgba(0, 0, 0, 0.35), 0 0 1px #000; }
.kinds, .files { display: flex; flex-direction: column; }
.kinds { height: 196px; }
.files { height: 44px; }
.entry { display: flex; flex: 1; align-items: center; gap: 5px; padding: 0 9px 0 20px; line-height: 20px; }
.entry.on { background: #2a6ae0; color: #fff; }
.more { width: 9px; height: 10px; margin-left: auto; fill: #fff; }
hr { margin: 6px 0 4px; border: 0; border-top: 1px solid #4b4b4b; }

.gallery { position: absolute; left: 492px; top: 77px; display: flex; width: 303px; height: 461px; padding-top: 3px; border-radius: 0 4px 5px 5px; background: #313131; box-shadow: 0 6px 16px rgba(0, 0, 0, 0.4), 0 0 1px #000; }
.scroll { flex: 1; }
h2 { margin: 0; height: 22px; padding-left: 5px; background: linear-gradient(#383838, #2f2f2f); color: #a9a9a9; font-size: 10px; font-weight: 400; line-height: 22px; }
.tiles { display: grid; grid-template-columns: repeat(3, 88px); gap: 8px; padding: 4px 0 4px 5px; }
.tile { width: 88px; height: 88px; border: 1px solid #b5b5b5; background: #fff; }
.tile svg { width: 86px; height: 86px; }
.tile.chosen { border-radius: 2px; box-shadow: 0 0 0 3px #686868, 0 0 0 4px #d0d0d0; }
.bar { width: 14px; margin-bottom: 4px; padding: 2px 0 0 3px; border-left: 1px solid #464646; background: #383838; }
.bar i { display: block; width: 7px; height: 358px; border-radius: 4px; background: #7b7b7b; }
.tip { position: absolute; left: 648px; top: 519px; padding: 0 5px; background: #262626; border: 1px solid #3d3d3d; color: #e8e8e8; font-size: 10px; font-weight: 500; line-height: 16px; }
.marks { position: absolute; left: 0; top: 0; pointer-events: none; }
.note { position: absolute; left: 416px; top: 573px; margin: 0; color: #ff2600; font-family: "Noto Sans CJK KR", sans-serif; font-size: 27px; font-weight: 900; line-height: 40px; white-space: nowrap; }
</style>
